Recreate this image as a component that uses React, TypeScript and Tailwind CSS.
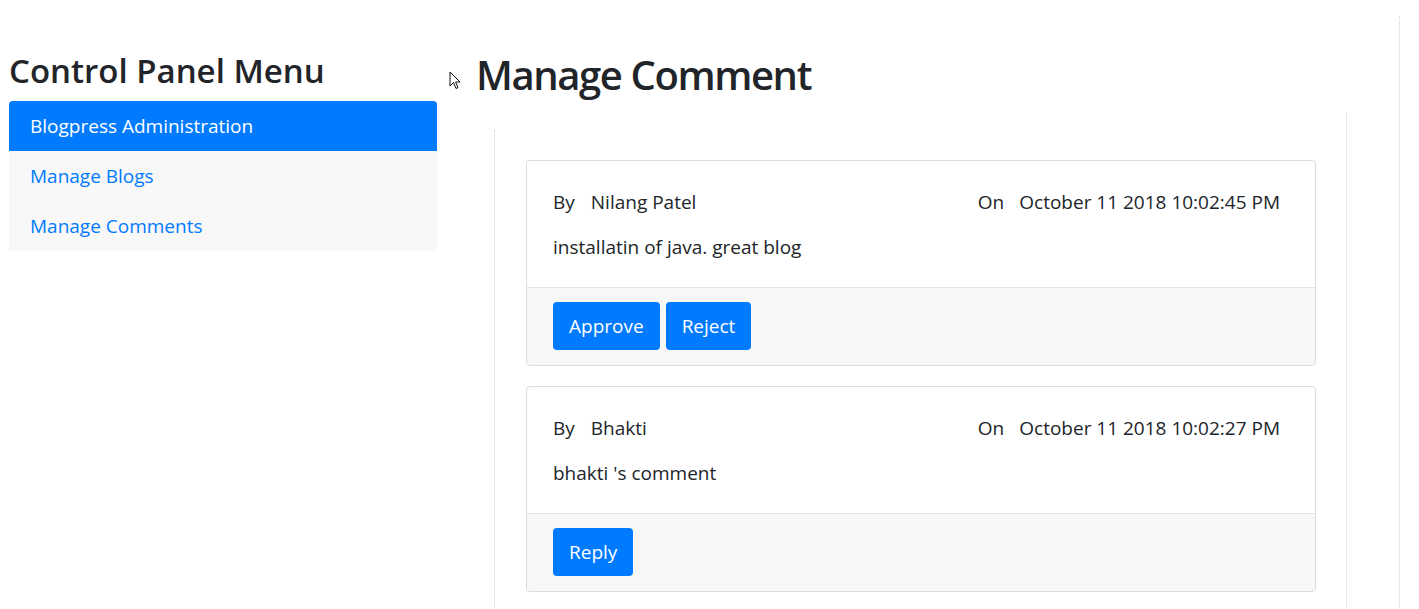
import React from "react";

const font = { fontFamily: '"Open Sans", "Noto Sans", sans-serif' };

function Cursor() {
  return (
    <svg width="12" height="19" viewBox="0 0 12 19" className="absolute left-[449px] top-[71px]">
      <path d="M1 1 L1 15 L4.5 11.5 L7 17.5 L9 16.6 L6.6 11 L11 11 Z" fill="#fff" stroke="#111" strokeWidth="1" strokeLinejoin="round" />
    </svg>
  );
}

function Card({ by, on, text, buttons }: { by: string; on: string; text: string; buttons: string[] }) {
  return (
    <div className="w-[790px] rounded-[4px] border border-[#dcdcdc] bg-white overflow-hidden">
      <div className="px-[26px] pt-[28px] pb-[27px] text-[19px] text-[#212529] leading-[26px]">
        <div className="flex justify-between pr-[9px]">
          <div>
            By<span className="ml-[16px]">{by}</span>
          </div>
          <div>
            On<span className="ml-[15px]">{on}</span>
          </div>
        </div>
        <div className="mt-[19px]">{text}</div>
      </div>
      <div className="border-t border-[#e4e4e4] bg-[#f7f7f7] px-[26px] pt-[14px] pb-[15px] flex gap-[6px]">
        {buttons.map((b) => (
          <button key={b} className="h-[48px] rounded-[4px] bg-[#007bff] px-[16px] text-[19px] text-white">
            {b}
          </button>
        ))}
      </div>
    </div>
  );
}

export default function App() {
  return (
    <div className="relative w-[1419px] h-[609px] bg-white overflow-hidden text-[#212529]" style={font}>
      <Cursor />
      <div className="absolute left-[494px] top-[130px] h-[480px] border-l border-dotted border-[#d6d6d6]" />
      <div className="absolute left-[1346px] top-[112px] h-[500px] border-l border-dotted border-[#d6d6d6]" />
      <div className="absolute left-[1399px] top-[16px] h-[600px] border-l border-dotted border-[#d6d6d6]" />
      <div className="flex">
        <div className="ml-[9px] w-[428px] pt-[51px]">
          <h2 className="text-[33px] font-semibold leading-[40px] mb-[10px]">Control Panel Menu</h2>
          <div className="text-[19px]">
            <div className="h-[50px] flex items-center pl-[21px] bg-[#007bff] text-white rounded-t-[4px]">Blogpress Administration</div>
            <div className="h-[50px] flex items-center pl-[21px] bg-[#f8f8f8] text-[#007bff]">Manage Blogs</div>
            <div className="h-[50px] flex items-center pl-[21px] bg-[#f8f8f8] text-[#007bff]">Manage Comments</div>
          </div>
        </div>
        <div className="ml-[39px] flex-1">
          <h1 className="pt-[50px] text-[40px] font-semibold leading-[50px] tracking-[-1.4px]">Manage Comment</h1>
          <div className="ml-[50px] mt-[60px] flex flex-col gap-[20px]">
            <Card by="Nilang Patel" on="October 11 2018 10:02:45 PM" text="installatin of java. great blog" buttons={["Approve", "Reject"]} />
            <Card by="Bhakti" on="October 11 2018 10:02:27 PM" text="bhakti 's comment" buttons={["Reply"]} />
          </div>
        </div>
      </div>
    </div>
  );
}
